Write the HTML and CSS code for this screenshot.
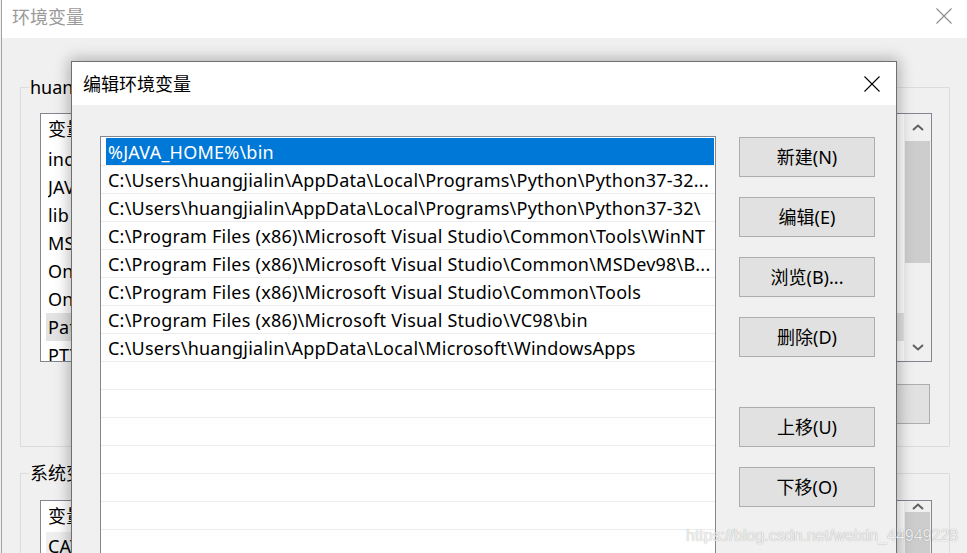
FILE: index.html
```html
<!DOCTYPE html>
<html lang="zh-CN">
<head>
<meta charset="utf-8">
<title>编辑环境变量</title>
<link rel="stylesheet" href="styles.css">
</head>
<body>
<div class="window">
  <div class="titlebar">
    <span class="win-title">环境变量</span>
    <svg class="close-icon dim" width="16" height="16" viewBox="0 0 16 16"><path d="M0.5 0.5L15.5 15.5M15.5 0.5L0.5 15.5"/></svg>
  </div>
  <div class="win-body">
    <fieldset class="group">
      <legend>huangjialin 的用户变量(U)</legend>
      <div class="listview tall">
        <div class="lv-main">
          <div class="lv-head"><span class="col-name">变量</span><span class="col-value">值</span></div>
          <div class="lv-row"><span class="col-name">include</span><span class="col-value">C:\Program Files (x86)\Microsoft Visual Studio\VC98</span></div>
          <div class="lv-row"><span class="col-name">JAVA_HOME</span><span class="col-value">C:\Program Files\Java\jdk1.8.0_191</span></div>
          <div class="lv-row"><span class="col-name">lib</span><span class="col-value">C:\Program Files (x86)\Microsoft Visual Studio\VC98</span></div>
          <div class="lv-row"><span class="col-name">MSDevDir</span><span class="col-value">C:\Program Files (x86)\Microsoft Visual Studio\Common</span></div>
          <div class="lv-row"><span class="col-name">OneDrive</span><span class="col-value">C:\Users\huangjialin\OneDrive</span></div>
          <div class="lv-row"><span class="col-name">OneDriveConsumer</span><span class="col-value">C:\Users\huangjialin\OneDrive</span></div>
          <div class="lv-row picked"><span class="col-name">Path</span><span class="col-value">%JAVA_HOME%\bin;C:\Users\huangjialin\AppData\Local...</span></div>
          <div class="lv-row"><span class="col-name">PT7HOME</span><span class="col-value">C:\Program Files (x86)\Cisco Packet Tracer 7.2</span></div>
        </div>
        <div class="vscroll">
          <div class="sb-arrow"><svg width="12" height="7" viewBox="0 0 12 7"><path d="M1 6L6 1.5L11 6"/></svg></div>
          <div class="sb-thumb"></div>
          <div class="sb-track"></div>
          <div class="sb-arrow"><svg width="12" height="7" viewBox="0 0 12 7"><path d="M1 1L6 5.5L11 1"/></svg></div>
        </div>
      </div>
      <div class="btn-row">
        <button class="btn">新建(N)...</button>
        <button class="btn">编辑(E)...</button>
        <button class="btn">删除(D)</button>
      </div>
    </fieldset>
    <fieldset class="group">
      <legend>系统变量(S)</legend>
      <div class="listview">
        <div class="lv-main">
          <div class="lv-head"><span class="col-name">变量</span><span class="col-value">值</span></div>
          <div class="lv-row soft"><span class="col-name">CATALINA_HOME</span><span class="col-value">C:\apache-tomcat</span></div>
        </div>
        <div class="vscroll">
          <div class="sb-arrow"><svg width="12" height="7" viewBox="0 0 12 7"><path d="M1 6L6 1.5L11 6"/></svg></div>
          <div class="sb-thumb"></div>
        </div>
      </div>
    </fieldset>
  </div>
</div>

<div class="dialog">
  <div class="dlg-titlebar">
    <span class="dlg-title">编辑环境变量</span>
    <svg class="close-icon" width="16" height="16" viewBox="0 0 16 16"><path d="M0.5 0.5L15.5 15.5M15.5 0.5L0.5 15.5"/></svg>
  </div>
  <div class="dlg-body">
    <div class="path-list">
      <div class="p-row"><span class="p-cell selected">%JAVA_HOME%\bin</span></div>
      <div class="p-row"><span class="p-cell">C:\Users\huangjialin\AppData\Local\Programs\Python\Python37-32...</span></div>
      <div class="p-row"><span class="p-cell">C:\Users\huangjialin\AppData\Local\Programs\Python\Python37-32\</span></div>
      <div class="p-row"><span class="p-cell">C:\Program Files (x86)\Microsoft Visual Studio\Common\Tools\WinNT</span></div>
      <div class="p-row"><span class="p-cell">C:\Program Files (x86)\Microsoft Visual Studio\Common\MSDev98\B...</span></div>
      <div class="p-row"><span class="p-cell">C:\Program Files (x86)\Microsoft Visual Studio\Common\Tools</span></div>
      <div class="p-row"><span class="p-cell">C:\Program Files (x86)\Microsoft Visual Studio\VC98\bin</span></div>
      <div class="p-row"><span class="p-cell">C:\Users\huangjialin\AppData\Local\Microsoft\WindowsApps</span></div>
      <div class="p-row"><span class="p-cell"></span></div>
      <div class="p-row"><span class="p-cell"></span></div>
      <div class="p-row"><span class="p-cell"></span></div>
      <div class="p-row"><span class="p-cell"></span></div>
      <div class="p-row"><span class="p-cell"></span></div>
      <div class="p-row"><span class="p-cell"></span></div>
      <div class="p-row"><span class="p-cell"></span></div>
    </div>
    <div class="btn-col">
      <button class="btn">新建(N)</button>
      <button class="btn">编辑(E)</button>
      <button class="btn">浏览(B)...</button>
      <button class="btn">删除(D)</button>
      <button class="btn spaced">上移(U)</button>
      <button class="btn">下移(O)</button>
    </div>
  </div>
</div>

<div class="watermark">https://blog.csdn.net/weixin_44949228</div>
</body>
</html>
```

FILE: styles.css
```css
* { box-sizing: border-box; }

body {
  margin: 0;
  width: 967px;
  height: 553px;
  overflow: hidden;
  position: relative;
  background: #f0f0f0;
  color: #000;
  font-family: "Noto Sans", "Noto Sans CJK SC", sans-serif;
  font-size: 18px;
}

/* ---------- background window ---------- */
.window {
  height: 553px;
  margin-left: 1px;
  border-left: 1px solid #a3a3a3;
  background: #f0f0f0;
}

.titlebar {
  height: 38px;
  background: #fff;
  display: flex;
  justify-content: space-between;
  align-items: flex-start;
  padding: 0 15px 0 10px;
}

.win-title {
  line-height: 32px;
  color: #9a9a9a;
  font-family: "Noto Sans CJK SC", sans-serif;
}

.close-icon {
  margin-top: 8px;
  fill: none;
  stroke: #000;
  stroke-width: 1.1;
}
.close-icon.dim { stroke: #8a8a8a; }

.win-body {
  padding: 0 17px 0 18px;
}

.group {
  margin: 37px 0 0 0;
  padding: 0 17px 0 19px;
  border: 1px solid #dcdcdc;
  min-width: 0;
}
.group + .group { margin-top: 14px; }

.group legend {
  margin-left: -11px;
  padding: 0 1px;
  line-height: 24px;
}

.listview {
  margin-top: 14px;
  height: 249px;
  border: 1px solid #828790;
  background: #fff;
  display: flex;
  overflow: hidden;
}
.group + .group .listview { height: 60px; margin-top: 15px; }

.lv-main {
  flex: 1;
  min-width: 0;
  overflow: hidden;
  letter-spacing: 0.2px;
}

.lv-head, .lv-row {
  display: flex;
  white-space: nowrap;
}
.lv-head {
  height: 31px;
  line-height: 31px;
  padding-left: 7px;
}
.lv-row {
  height: 28px;
  line-height: 28px;
  margin-left: 5px;
  padding-left: 2px;
}
.lv-row.picked { background: #e3e3e3; }
.lv-row.soft { background: #efefef; }

.col-name { width: 230px; flex: none; overflow: hidden; }
.col-value { flex: 1; overflow: hidden; }

.vscroll {
  width: 27px;
  flex: none;
  background: #f0f0f0;
  display: flex;
  flex-direction: column;
}
.sb-arrow {
  height: 27px;
  display: flex;
  align-items: center;
  justify-content: center;
}
.sb-arrow svg { fill: none; stroke: #606060; stroke-width: 2; }
.sb-thumb {
  height: 122px;
  margin: 0 1px;
  background: #cdcdcd;
}
.sb-track { flex: 1; }

.btn-row {
  display: flex;
  justify-content: flex-end;
  gap: 20px;
  margin: 22px 2px 22px 0;
}
.btn-row .btn { width: 136px; }

.btn {
  height: 40px;
  padding: 0;
  margin: 0;
  background: #e1e1e1;
  border: 1px solid #adadad;
  border-radius: 0;
  color: #000;
  font: inherit;
  font-size: 18px;
  line-height: 38px;
  text-align: center;
}

/* ---------- foreground dialog ---------- */
.dialog {
  position: absolute;
  left: 71px;
  top: 61px;
  width: 826px;
  height: 520px;
  border: 1px solid #707070;
  background: #f0f0f0;
  box-shadow: 0 0 14px 2px rgba(0, 0, 0, 0.28);
  display: flex;
  flex-direction: column;
}

.dlg-titlebar {
  height: 43px;
  flex: none;
  background: #fff;
  display: flex;
  justify-content: space-between;
  align-items: flex-start;
  padding: 0 16px 0 11px;
}
.dlg-title {
  line-height: 43px;
  font-family: "Noto Sans CJK SC", sans-serif;
}
.dlg-titlebar .close-icon { margin-top: 14px; }

.dlg-body {
  flex: 1;
  display: flex;
  gap: 23px;
  padding: 31px 21px 0 28px;
}

.path-list {
  width: 616px;
  flex: none;
  background: #fff;
  border: 1px solid #828790;
  padding-top: 1px;
  overflow: hidden;
}

.p-row {
  height: 28px;
  border-bottom: 1px solid #ececec;
  display: flex;
  white-space: nowrap;
}
.p-cell {
  flex: 1;
  margin: 0 1px 0 5px;
  padding-left: 2px;
  line-height: 29px;
  letter-spacing: 0.23px;
  overflow: hidden;
}
.p-cell.selected {
  background: #0078d7;
  color: #fff;
}

.btn-col {
  width: 136px;
  flex: none;
  display: flex;
  flex-direction: column;
  gap: 20px;
  padding-top: 1px;
}
.btn-col .spaced { margin-top: 30px; }

/* ---------- overlay watermark ---------- */
.watermark {
  position: absolute;
  left: 686px;
  top: 526px;
  font-family: "Liberation Sans", Arial, sans-serif;
  font-size: 16px;
  line-height: 20px;
  color: rgba(255, 255, 255, 0.85);
  text-shadow: 0 0 1px rgba(0, 0, 0, 0.4);
  white-space: nowrap;
}
```
